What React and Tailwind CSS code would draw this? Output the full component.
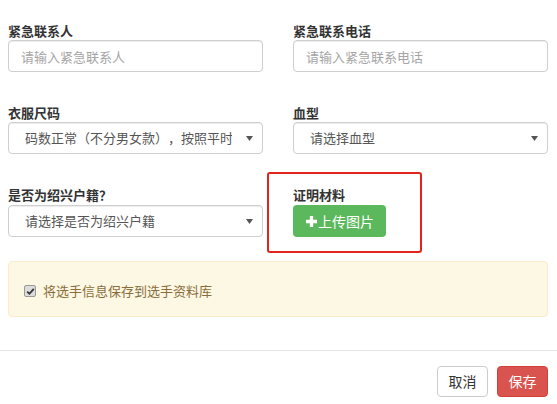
import React from 'react';

const font = { fontFamily: '"Noto Sans CJK SC", "Noto Sans", sans-serif' };

const Label = ({ children }) => (
  <div className="text-[13px] leading-[18px] font-bold text-[#333]">{children}</div>
);

const TextInput = ({ placeholder }) => (
  <input
    type="text"
    placeholder={placeholder}
    className="block w-full h-[32px] px-[12px] text-[13px] text-[#555] placeholder:text-[#a5a5a5] bg-white border border-[#cfcfcf] rounded-[4px] shadow-[inset_0_1px_1px_rgba(0,0,0,0.075)] outline-none"
  />
);

const Select = ({ value }) => (
  <div className="flex items-center w-full h-[32px] pl-[16px] pr-[9px] bg-white border border-[#cfcfcf] rounded-[4px] shadow-[inset_0_1px_1px_rgba(0,0,0,0.075)]">
    <span className="flex-1 overflow-hidden whitespace-nowrap text-[13px] text-[#555] mr-[14px]">{value}</span>
    <svg width="7" height="5" viewBox="0 0 7 5" className="shrink-0">
      <path d="M0 0h7L3.5 5z" fill="#555" />
    </svg>
  </div>
);

export default function App() {
  return (
    <div className="w-[557px] h-[404px] bg-white overflow-hidden [text-spacing-trim:space-all]" style={font}>
      <div className="grid grid-cols-2 gap-x-[30px] pl-[8px] pr-[9px] pt-[22px]">
        <div>
          <Label>紧急联系人</Label>
          <TextInput placeholder="请输入紧急联系人" />
        </div>
        <div>
          <Label>紧急联系电话</Label>
          <TextInput placeholder="请输入紧急联系电话" />
        </div>

        <div className="mt-[32px]">
          <Label>衣服尺码</Label>
          <Select value="码数正常（不分男女款），按照平时穿衣尺码选择" />
        </div>
        <div className="mt-[32px]">
          <Label>血型</Label>
          <Select value="请选择血型" />
        </div>

        <div className="mt-[32px]">
          <Label>是否为绍兴户籍？</Label>
          <div className="mt-[1px]">
            <Select value="请选择是否为绍兴户籍" />
          </div>
        </div>
        <div className="mt-[32px] relative">
          <Label>证明材料</Label>
          <button className="flex items-center h-[32px] mt-[1px] pl-[13px] pr-[12px] bg-[#5cb85c] text-white text-[14px] rounded-[4px]">
            <svg width="11" height="11" viewBox="0 0 10 10" className="mr-[1px]">
              <path d="M3.5 0h3v3.5H10v3H6.5V10h-3V6.5H0v-3h3.5z" fill="#fff" />
            </svg>
            上传图片
          </button>
          <div className="absolute left-[-26px] top-[-14px] w-[155px] h-[81px] border-[2.5px] border-[#e3241c] rounded-[3px] pointer-events-none" />
        </div>
      </div>

      <div className="ml-[8px] mr-[9px] mt-[24px] h-[56px] pt-[4px] flex items-center pl-[15px] bg-[#fcf8e3] border border-[#faebcc] rounded-[4px]">
        <span className="flex items-center justify-center w-[12px] h-[12px] mr-[7px] bg-[#dcdcdc] border border-[#999] rounded-[2px]">
          <svg width="9" height="9" viewBox="0 0 9 9">
            <path d="M1.2 4.6l2.2 2.2L7.8 1.8" fill="none" stroke="#333" strokeWidth="1.8" />
          </svg>
        </span>
        <span className="text-[13px] text-[#8a6d3b]">将选手信息保存到选手资料库</span>
      </div>

      <div className="mt-[33px] border-t border-[#e5e5e5]" />

      <div className="flex justify-end gap-[9px] pr-[9px] pt-[15px]">
        <button className="w-[51px] h-[31px] flex items-center justify-center text-[14px] text-[#333] bg-white border border-[#ccc] rounded-[4px]">
          取消
        </button>
        <button className="w-[51px] h-[31px] flex items-center justify-center text-[14px] text-white bg-[#d9534f] border border-[#d43f3a] rounded-[4px]">
          保存
        </button>
      </div>
    </div>
  );
}
